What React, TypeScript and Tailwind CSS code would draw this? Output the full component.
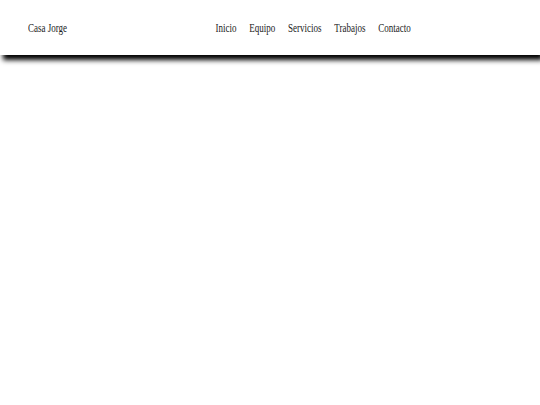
export default function App() {
  const links = ['Inicio', 'Equipo', 'Servicios', 'Trabajos', 'Contacto'];
  return (
    <div className="min-h-[405px] bg-white font-['Liberation_Serif',serif] text-[#222]">
      <header className="h-[55px] flex items-center px-7 bg-white shadow-[3px_5px_5px_#000]">
        <div className="flex items-center whitespace-nowrap text-[12px] scale-x-75 origin-left">
          <span className="shrink-0">Casa Jorge</span>
          <nav className="ml-[198px] flex shrink-0 gap-[17px]">
            {links.map((l) => (
              <a key={l} href="#">
                {l}
              </a>
            ))}
          </nav>
        </div>
      </header>
    </div>
  );
}
